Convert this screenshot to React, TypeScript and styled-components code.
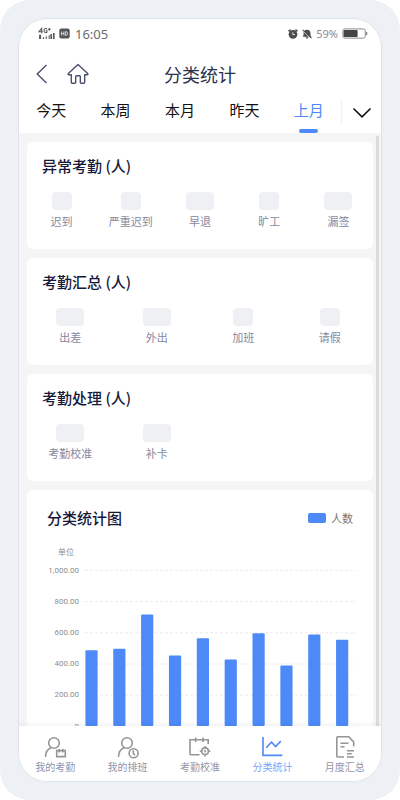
import React, { useState } from "react";
import styled, { createGlobalStyle } from "styled-components";

const GlobalStyle = createGlobalStyle`
  *, *::before, *::after { box-sizing: border-box; }
  body {
    margin: 0;
    background: #fff;
    font-family: "Noto Sans CJK SC", "Noto Sans", sans-serif;
    color: #16193a;
  }
  h1, h2, ul { margin: 0; padding: 0; font-weight: inherit; }
  ul { list-style: none; }
  button { border: 0; background: none; padding: 0; font: inherit; color: inherit; cursor: pointer; }
  a { text-decoration: none; color: inherit; }
  svg { display: block; }
`;

const Device = styled.div`
  height: 100vh;
  padding: 18px;
  border-radius: 30px;
  background: #edf1f5;
  display: flex;
`;

const Screen = styled.div`
  flex: 1;
  min-width: 0;
  display: flex;
  flex-direction: column;
  overflow: hidden;
  border: 1px solid #dfe4ea;
  border-radius: 29px;
  background: #fff;
`;

const StatusBar = styled.div`
  flex: none;
  height: 29px;
  padding: 0 13px 0 19px;
  display: flex;
  align-items: center;
  justify-content: space-between;
  color: #6b6b6b;
  font-family: "Noto Sans", sans-serif;
`;

const StatusGroup = styled.div`
  display: flex;
  align-items: center;
  gap: 4px;
`;

const Clock = styled.span`
  font-size: 13px;
  line-height: 16px;
  margin-left: 1px;
`;

const Percent = styled.span`
  font-size: 11px;
  line-height: 16px;
  color: #8c8c8c;
`;

const Header = styled.header`
  flex: none;
  height: 52px;
  padding: 0 16px;
  display: grid;
  grid-template-columns: 1fr auto 1fr;
  align-items: center;
`;

const HeaderActions = styled.div`
  display: flex;
  align-items: center;
  gap: 18px;
  color: #4a4f6e;
`;

const PageTitle = styled.h1`
  font-size: 18px;
  line-height: 24px;
  color: #2b304d;
`;

const TabBar = styled.div`
  flex: none;
  display: flex;
  height: 33px;
`;

const TabList = styled.div`
  flex: 1;
  display: flex;
`;

const Tab = styled.button<{ $active: boolean }>`
  flex: 1;
  display: flex;
  flex-direction: column;
  align-items: center;
  justify-content: space-between;
  font-size: 15px;
  line-height: 20px;
  color: ${(p) => (p.$active ? "#4d8af8" : "#111")};

  &::after {
    content: "";
    width: 19px;
    height: 4px;
    border-radius: 2px;
    background: ${(p) => (p.$active ? "#4d8af8" : "transparent")};
  }
`;

const MoreButton = styled.button`
  flex: none;
  width: 40px;
  height: 24px;
  display: grid;
  place-items: center;
  padding-top: 2px;
  border-left: 1px solid #f1f1f1;
`;

const Body = styled.div`
  position: relative;
  flex: 1;
  min-height: 0;
  display: flex;
  background: #f5f5f5;
`;

const ScrollArea = styled.main`
  flex: 1;
  min-width: 0;
  overflow-y: auto;
  scrollbar-width: none;
  padding: 9px 8px;
  display: flex;
  flex-direction: column;
  gap: 9px;
`;

const ScrollThumb = styled.div`
  position: absolute;
  top: 3px;
  right: 2px;
  bottom: 0;
  width: 3px;
  background: #dcdcdc;
`;

const Shade = styled.div`
  position: absolute;
  left: 0;
  right: 0;
  bottom: 0;
  height: 5px;
  background: linear-gradient(to bottom, rgba(0, 0, 0, 0), rgba(0, 0, 0, 0.04));
  pointer-events: none;
`;

const Card = styled.section`
  flex: none;
  border-radius: 6px;
  background: #fff;
`;

const CardTitle = styled.h2`
  font-size: 15px;
  line-height: 20px;
  font-weight: 500;
  color: #16193a;
`;

const StatCardTitle = styled(CardTitle)`
  padding: 14px 15px 16px;
`;

const StatGrid = styled.ul<{ $columns: number }>`
  display: grid;
  grid-template-columns: repeat(${(p) => p.$columns}, 1fr);
  padding-bottom: 20px;
`;

const Stat = styled.li`
  display: flex;
  flex-direction: column;
  align-items: center;
  gap: 3px;
  font-size: 11px;
  line-height: 16px;
  color: #86889f;
  white-space: nowrap;
`;

const Placeholder = styled.span<{ $wide: boolean }>`
  width: ${(p) => (p.$wide ? 28 : 20)}px;
  height: 18px;
  border-radius: 4px;
  background: #eff0f4;
`;

const ChartHead = styled.div`
  display: flex;
  align-items: center;
  justify-content: space-between;
  padding: 18px 20px 2px;
`;

const Legend = styled.div`
  display: flex;
  align-items: center;
  gap: 5px;
  font-size: 11px;
  line-height: 16px;
  color: #777;

  &::before {
    content: "";
    width: 18px;
    height: 10px;
    border-radius: 2px;
    background: #4d8af8;
  }
`;

const ChartSvg = styled.svg`
  width: 100%;
  height: auto;

  text {
    font-family: Roboto, "Noto Sans CJK SC", sans-serif;
    font-size: 8px;
    fill: #8e8e8e;
  }
`;

const BottomNav = styled.nav`
  flex: none;
  height: 55px;
  display: flex;
  background: #fff;
`;

const NavLink = styled.a<{ $active: boolean }>`
  flex: 1;
  display: flex;
  flex-direction: column;
  align-items: center;
  padding-top: 10px;
  font-size: 10px;
  line-height: 14px;
  white-space: nowrap;
  color: ${(p) => (p.$active ? "#76a5fa" : "#9395ab")};

  svg {
    color: ${(p) => (p.$active ? "#4d8af8" : "#959595")};
  }
`;

const SignalIcon = () => (
  <svg width="17" height="13" viewBox="0 0 17 13" fill="none" stroke="#5b5b5b" strokeWidth="1.1" aria-hidden="true">
    <path d="M3.7 6.2V1.4L1 4.7h3.8M9 2.2C8.2 1 6 1.2 6 3.6s2.4 2.4 3 1.5V3.8H7.7M9.9 2.3h2.8M11.3.9v2.8" />
    <path d="M1.6 8.2h1v3.2h-1zM5.5 10v2M8.3 9.3V12M11.2 8.3V12" />
    <path d="M13.2 7v5M15.8 6v6" strokeWidth="1.7" />
  </svg>
);

const HdIcon = () => (
  <svg width="11" height="11" viewBox="0 0 11 11" aria-hidden="true">
    <rect x=".3" y=".5" width="10.4" height="10" rx="2" fill="#555" />
    <path d="M2.6 3.5v4M4.9 3.5v4M2.6 5.5h2.3M6.4 3.6v3.8h.8c1.8 0 1.8-3.8 0-3.8z" fill="none" stroke="#e4e4e4" strokeWidth=".9" />
  </svg>
);

const AlarmIcon = () => (
  <svg width="10" height="10" viewBox="0 0 11 11" aria-hidden="true">
    <path d="M.6 2.6 2.8.7M10.4 2.6 8.2.7" stroke="#4c4c4c" strokeWidth="1.6" />
    <circle cx="5.5" cy="5.9" r="4.8" fill="#4c4c4c" />
    <path d="M5.3 3.6v2.6h2.3" fill="none" stroke="#eee" strokeWidth="1" />
  </svg>
);

const MutedBellIcon = () => (
  <svg width="10" height="10" viewBox="0 0 11 11" aria-hidden="true">
    <path d="M5.5.7c2.6.2 3.8 1.6 3.8 3.6v2.5l1 1.8H.7l1-1.8V4.3C1.7 2.3 3 .9 5.5.7zM3.8 9.1h3.4c-.4 2-3 2-3.4 0z" fill="#4c4c4c" />
    <path d="M.7 2 10 10.6" stroke="#fff" strokeWidth="1" />
    <path d="M.7.9 10.4 9.9" stroke="#4c4c4c" strokeWidth="1.2" />
  </svg>
);

const BatteryIcon = () => (
  <svg width="26" height="11" viewBox="0 0 26 11" aria-hidden="true">
    <rect x=".9" y=".9" width="22.4" height="9.2" rx="2" fill="#fff" stroke="#8d8d8d" />
    <rect x="1.6" y="1.9" width="14" height="7.2" rx="1" fill="#454545" />
    <path d="M24.5 3.9v3.2" stroke="#8d8d8d" strokeWidth="1.6" />
  </svg>
);

const BackIcon = () => (
  <svg width="14" height="20" viewBox="0 0 14 20" fill="none" stroke="currentColor" strokeWidth="1.4" aria-hidden="true">
    <path d="M11.5 1 2.2 10l9.3 9" />
  </svg>
);

const HomeIcon = () => (
  <svg width="22" height="22" viewBox="0 0 22 22" fill="none" stroke="currentColor" strokeWidth="1.4" strokeLinejoin="round" aria-hidden="true">
    <path d="M11 1.4 1.3 10.6c-.5.6-.2 1.1.5 1.1h2.5v7.6c0 .6.3.9.9.9h2.6c.6 0 .9-.3.9-.9v-5.8c0-.5.3-.8.8-.8h3c.5 0 .8.3.8.8v5.8c0 .6.3.9.9.9h2.6c.6 0 .9-.3.9-.9v-7.6h2.5c.7 0 1-.5.5-1.1z" />
  </svg>
);

const ChevronIcon = () => (
  <svg width="20" height="12" viewBox="0 0 20 12" fill="none" stroke="#111" strokeWidth="1.6" aria-hidden="true">
    <path d="m1.5 1.5 8.5 8.3 8.5-8.3" />
  </svg>
);

const navIconProps = {
  width: 24,
  height: 24,
  viewBox: "0 0 24 24",
  fill: "none",
  stroke: "currentColor",
  strokeWidth: 1.6,
  "aria-hidden": true,
} as const;

const AttendanceIcon = () => (
  <svg {...navIconProps}>
    <circle cx="11" cy="7" r="5.3" />
    <path d="M2.5 21c.1-4.6 2-7.8 5.6-9.2M13.7 14.6h8.6v6h-8.6zM16.2 13v3.4M19.8 13v3.4" />
  </svg>
);

const ShiftIcon = () => (
  <svg {...navIconProps}>
    <circle cx="11" cy="7" r="5.3" />
    <path d="M2.5 21c.1-4.6 2-7.8 5.6-9.2" />
    <circle cx="17.6" cy="17.2" r="4.5" />
    <path d="M17.3 14.4v3l1.7 1.8" />
  </svg>
);

const CalibrateIcon = () => (
  <svg {...navIconProps}>
    <path d="M11.5 18.7H2.9c-.6 0-.9-.3-.9-.9V3.7h18.2v4.4M7.6 1.4V6M15 1.4V6" />
    <circle cx="17.1" cy="15.2" r="3.3" />
    <circle cx="17.1" cy="15.2" r=".4" />
    <path d="M17.1 9.9v2M17.1 18.5v2M11.8 15.2h2M20.4 15.2h2" />
  </svg>
);

const TrendIcon = () => (
  <svg {...navIconProps}>
    <path d="M3 1v18.4h19.3" />
    <path d="m6.1 11.7 5.4-5.5 4.1 4.4 5.2-5.5" />
  </svg>
);

const ReportIcon = () => (
  <svg {...navIconProps}>
    <path d="M11 21H5c-.8 0-1.2-.4-1.2-1.2V1.9C3.8 1.1 4.200.7 5 .7h10.700l5 5.300v4.300M7.500 7.300h8M7.500 10.700H11.500M14 14.700h7M14 17.800h4.700M14 21h7" />
  </svg>
);

const tabs = ["今天", "本周", "本月", "昨天", "上月"];

type StatItem = { label: string; wide: boolean };

const statCards: { title: string; columns: number; items: StatItem[] }[] = [
  {
    title: "异常考勤 (人)",
    columns: 5,
    items: [
      { label: "迟到", wide: false },
      { label: "严重迟到", wide: false },
      { label: "早退", wide: true },
      { label: "旷工", wide: false },
      { label: "漏签", wide: true },
    ],
  },
  {
    title: "考勤汇总 (人)",
    columns: 4,
    items: [
      { label: "出差", wide: true },
      { label: "外出", wide: true },
      { label: "加班", wide: false },
      { label: "请假", wide: false },
    ],
  },
  {
    title: "考勤处理 (人)",
    columns: 4,
    items: [
      { label: "考勤校准", wide: true },
      { label: "补卡", wide: true },
    ],
  },
];

const ticks = ["1,000.00", "800.00", "600.00", "400.00", "200.00", "0"];
const values = [485, 495, 714, 452, 563, 427, 594, 388, 587, 553];

const navItems = [
  { label: "我的考勤", Icon: AttendanceIcon },
  { label: "我的排班", Icon: ShiftIcon },
  { label: "考勤校准", Icon: CalibrateIcon },
  { label: "分类统计", Icon: TrendIcon },
  { label: "月度汇总", Icon: ReportIcon },
];

const PLOT_TOP = 40;
const TICK_STEP = 31.2;
const PLOT_HEIGHT = TICK_STEP * 5;
const BAR_STEP = 27.85;

const BarChart = () => (
  <ChartSvg viewBox="0 0 346 210" role="img" aria-label="分类统计图">
    <text x="31" y="25">单位</text>
    {ticks.map((tick, i) => {
      const y = PLOT_TOP + i * TICK_STEP;
      return (
        <g key={tick}>
          <text x="52" y={y + 2.5} textAnchor="end">{tick}</text>
          <line x1="58" x2="329" y1={y + 0.4} y2={y + 0.4} stroke="#ececec" strokeDasharray="3 2" />
        </g>
      );
    })}
    {values.map((value, i) => {
      const height = (value / 1000) * PLOT_HEIGHT;
      return (
        <rect
          key={i}
          x={58.4 + i * BAR_STEP}
          y={PLOT_TOP + PLOT_HEIGHT - height}
          width="12.2"
          height={height}
          rx="1"
          fill="#4d8af8"
        />
      );
    })}
  </ChartSvg>
);

export default function App() {
  const [activeTab, setActiveTab] = useState("上月");

  return (
    <>
      <GlobalStyle />
      <Device>
        <Screen>
          <StatusBar>
            <StatusGroup>
              <SignalIcon />
              <HdIcon />
              <Clock>16:05</Clock>
            </StatusGroup>
            <StatusGroup>
              <AlarmIcon />
              <MutedBellIcon />
              <Percent>59%</Percent>
              <BatteryIcon />
            </StatusGroup>
          </StatusBar>

          <Header>
            <HeaderActions>
              <button type="button" aria-label="返回"><BackIcon /></button>
              <button type="button" aria-label="首页"><HomeIcon /></button>
            </HeaderActions>
            <PageTitle>分类统计</PageTitle>
          </Header>

          <TabBar>
            <TabList role="tablist">
              {tabs.map((tab) => (
                <Tab
                  key={tab}
                  type="button"
                  role="tab"
                  aria-selected={tab === activeTab}
                  $active={tab === activeTab}
                  onClick={() => setActiveTab(tab)}
                >
                  {tab}
                </Tab>
              ))}
            </TabList>
            <MoreButton type="button" aria-label="更多"><ChevronIcon /></MoreButton>
          </TabBar>

          <Body>
            <ScrollArea>
              {statCards.map((card) => (
                <Card key={card.title}>
                  <StatCardTitle>{card.title}</StatCardTitle>
                  <StatGrid $columns={card.columns}>
                    {card.items.map((item) => (
                      <Stat key={item.label}>
                        <Placeholder $wide={item.wide} />
                        {item.label}
                      </Stat>
                    ))}
                  </StatGrid>
                </Card>
              ))}
              <Card>
                <ChartHead>
                  <CardTitle>分类统计图</CardTitle>
                  <Legend>人数</Legend>
                </ChartHead>
                <BarChart />
              </Card>
            </ScrollArea>
            <ScrollThumb />
            <Shade />
          </Body>

          <BottomNav>
            {navItems.map(({ label, Icon }) => (
              <NavLink key={label} href="#" $active={label === "分类统计"}>
                <Icon />
                {label}
              </NavLink>
            ))}
          </BottomNav>
        </Screen>
      </Device>
    </>
  );
}
